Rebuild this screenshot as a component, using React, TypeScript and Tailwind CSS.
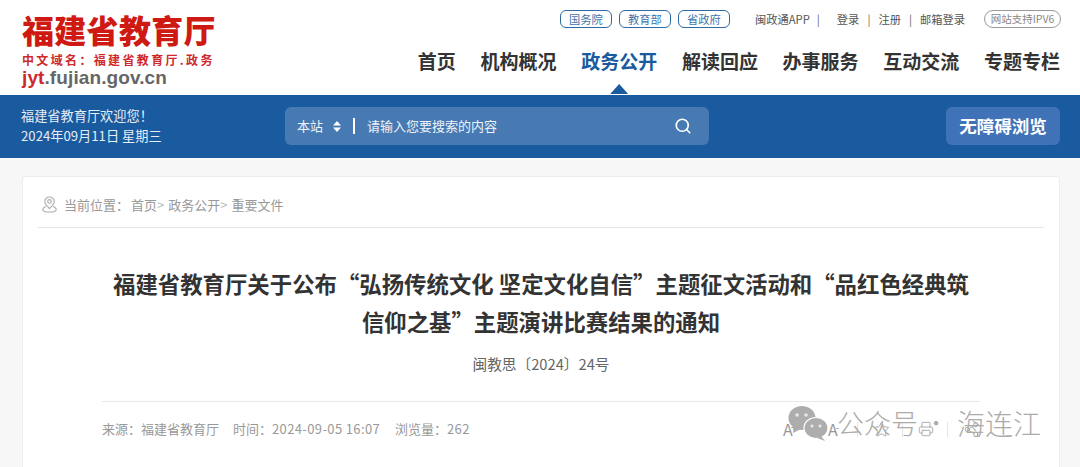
import { Search, Star, Printer, Share2 } from 'lucide-react';

const CJK = "font-['Noto_Sans_CJK_SC','Liberation_Sans',sans-serif]";

const links = ['国务院', '教育部', '省政府'];
const navItems = ['首页', '机构概况', '政务公开', '解读回应', '办事服务', '互动交流', '专题专栏'];

const Header = () => (
  <header className="flex h-[95px] justify-between bg-white pl-[22px] pr-5">
    <div className="pt-[10px]">
      <div className="text-[32px] leading-[38px] font-black tracking-[0.3px] text-[#cf1a14]">福建省教育厅</div>
      <div className="mt-[4px] text-[12px] leading-[16px] font-bold tracking-[2.35px] text-[#d0282a]">中文域名：福建省教育厅.政务</div>
      <div className="font-['Liberation_Sans'] text-[19px] leading-[19px] font-bold tracking-[0.1px] text-[#666]">
        <span className="text-[#d0282a]">jyt</span>.fujian.gov.cn
      </div>
    </div>
    <div className="flex flex-col items-end">
      <div className="mt-[10px] flex h-[18px] items-center text-[11.25px]">
        <div className="mr-[25px] flex gap-[7px]">
          {links.map((l) => (
            <span key={l} className="flex h-[18px] w-[52px] items-center justify-center rounded-[6px] border border-[#2f6aa5] text-[#3f74ab]">
              {l}
            </span>
          ))}
        </div>
        <span className="text-[#555]">闽政通APP</span>
        <span className="mx-[7px] text-[#666]">|</span>
        <span className="ml-[10px] text-[#555]">登录</span>
        <span className="mx-[8px] text-[#666]">|</span>
        <span className="text-[#555]">注册</span>
        <span className="mx-[8px] text-[#666]">|</span>
        <span className="text-[#555]">邮箱登录</span>
        <span className="-mr-[1px] ml-[19px] flex h-[18px] w-[77px] items-center justify-center rounded-full border border-[#999] text-[10.5px] text-[#888]">
          网站支持IPV6
        </span>
      </div>
      <nav className="mt-[19px] flex gap-[24.7px] text-[19px] leading-[28px] font-bold text-[#333]">
        {navItems.map((item) => (
          <div key={item} className={`relative ${item === '政务公开' ? 'text-[#1a5a9e]' : ''}`}>
            {item}
            {item === '政务公开' && (
              <span className="absolute top-[37px] left-1/2 h-[10px] w-[18px] -translate-x-1/2 bg-[#1a5a9e] [clip-path:polygon(50%_0,100%_100%,0_100%)]" />
            )}
          </div>
        ))}
      </nav>
    </div>
  </header>
);

const SearchBar = () => (
  <div className="flex h-[63px] items-center bg-[#1a5a9e] pb-[1px] pl-[21px] pr-5 text-white">
    <div className="w-[264px] text-[13.2px] leading-[20px] text-[#e6eef6]">
      <div>福建省教育厅欢迎您！</div>
      <div>2024年09月11日 星期三</div>
    </div>
    <div className="flex h-[38px] w-[424px] items-center rounded-[6px] bg-[#477ab2] px-[12px] text-[13px]">
      <span className="text-[#eef3f9]">本站</span>
      <svg width="8" height="11" viewBox="0 0 8 11" className="ml-[10px] fill-white">
        <path d="M4 0 L8 4.5 L0 4.5 Z M0 6.5 L8 6.5 L4 11 Z" />
      </svg>
      <span className="ml-[12px] h-[16px] w-[2px] bg-white" />
      <span className="ml-[12px] text-[#eef3f9]">请输入您要搜索的内容</span>
      <Search className="mr-[5px] ml-auto h-[18px] w-[18px]" strokeWidth={2.2} />
    </div>
    <div className="ml-auto flex h-[38px] w-[114px] items-center justify-center rounded-[6px] bg-[#4072b8] text-[17.5px] font-bold">
      无障碍浏览
    </div>
  </div>
);

const Breadcrumb = () => (
  <div className="mx-[15px] flex h-[51px] items-center border-b border-[#e5e5e5] pt-[5px] pl-[4px] text-[13px] text-[#999]">
    <svg width="15" height="17" viewBox="0 0 15 17" fill="none" stroke="#aaa" strokeWidth="1.1">
      <path d="M7.5 1 C4.6 1 2.8 3 2.8 5.5 C2.8 8.2 5.5 10.6 7.5 12.5 C9.5 10.6 12.2 8.2 12.2 5.5 C12.2 3 10.4 1 7.5 1 Z" />
      <circle cx="7.5" cy="5.4" r="1.8" />
      <path d="M4 10.5 C2 11.2 0.8 12.2 0.8 13.4 C0.8 15 3.8 16 7.5 16 C11.2 16 14.2 15 14.2 13.4 C14.2 12.2 13 11.2 11 10.5" />
    </svg>
    <span className="ml-[7px]">当前位置：</span>
    <span className="ml-[2px]">首页</span>
    <span className="text-[#bbb]">&gt;</span>
    <span className="ml-[4px]">政务公开</span>
    <span className="text-[#bbb]">&gt;</span>
    <span className="ml-[4px]">重要文件</span>
  </div>
);

const Toolbar = () => (
  <div className="flex h-[18px] items-center text-[#999]">
    <span className="w-[45px] text-[16px] leading-[18px]">
      A<sup className="-ml-[2px] text-[10px]">+</sup>
    </span>
    <span className="w-[29px] text-[16px] leading-[18px]">
      A<sup className="-ml-[2px] text-[10px]">-</sup>
    </span>
    <span className="h-[15px] w-[1px] bg-[#e5e5e5]" />
    <Star className="ml-[15px] h-[17px] w-[17px]" strokeWidth={1.2} />
    <span className="ml-[12px] h-[15px] w-[1px] bg-[#e5e5e5]" />
    <Printer className="ml-[15px] h-[16px] w-[16px]" strokeWidth={1.2} />
    <span className="ml-[13px] h-[15px] w-[1px] bg-[#e5e5e5]" />
    <Share2 className="ml-[15px] h-[17px] w-[17px]" strokeWidth={1.2} />
  </div>
);

const Article = () => (
  <div className="mt-[18px] mr-[20px] ml-[22px] h-[291px] rounded-t-[3px] border border-b-0 border-[#ededed] bg-white">
    <Breadcrumb />
    <h1 className="mx-auto mt-[36px] w-[900px] text-center text-[22.4px] leading-[38px] font-bold text-[#333]">
      福建省教育厅关于公布“弘扬传统文化 坚定文化自信”主题征文活动和“品红色经典筑
      <br />
      信仰之基”主题演讲比赛结果的通知
    </h1>
    <p className="mt-[14px] text-center text-[14.7px] leading-[20px] text-[#666]">闽教思〔2024〕24号</p>
    <div className="mx-[79px] mt-[27px] flex items-start justify-between border-t border-[#e8e8e8] pt-[18px] text-[13px] leading-[18px] text-[#999]">
      <div className="flex gap-[14px]">
        <span>来源：福建省教育厅</span>
        <span>
          时间：<span className="tracking-[0.37px]">2024-09-05 16:07</span>
        </span>
        <span className="ml-[1px]">
          浏览量：<span className="tracking-[0.3px]">262</span>
        </span>
      </div>
      <Toolbar />
    </div>
  </div>
);

const Watermark = () => (
  <div className="absolute top-[405px] left-[788px] flex items-center text-[#ababab]">
    <svg width="41" height="36" viewBox="0 0 41 36" className="fill-[#adadad]">
      <ellipse cx="14" cy="13" rx="13.5" ry="12" />
      <path d="M6 21 L5 28 L13 24 Z" />
      <ellipse cx="28" cy="23" rx="12" ry="10.5" stroke="#fff" strokeWidth="1.2" />
      <path d="M33 31 L37 36 L29 33 Z" />
      <circle cx="9" cy="10" r="1.8" fill="#e8e8e8" />
      <circle cx="18" cy="10" r="1.8" fill="#e8e8e8" />
      <circle cx="24" cy="21" r="1.5" fill="#e8e8e8" />
      <circle cx="32" cy="21" r="1.5" fill="#e8e8e8" />
    </svg>
    <span className="ml-[8px] text-[27px] leading-[34px] font-light">公众号</span>
    <span className="ml-[8px] text-[20px] leading-[34px]">·</span>
    <span className="ml-[11px] text-[28px] leading-[34px] font-light">海连江</span>
  </div>
);

export default function App() {
  return (
    <div className={`relative h-[467px] w-[1080px] overflow-hidden bg-[#f7f7f7] ${CJK}`}>
      <Header />
      <SearchBar />
      <Article />
      <Watermark />
    </div>
  );
}
